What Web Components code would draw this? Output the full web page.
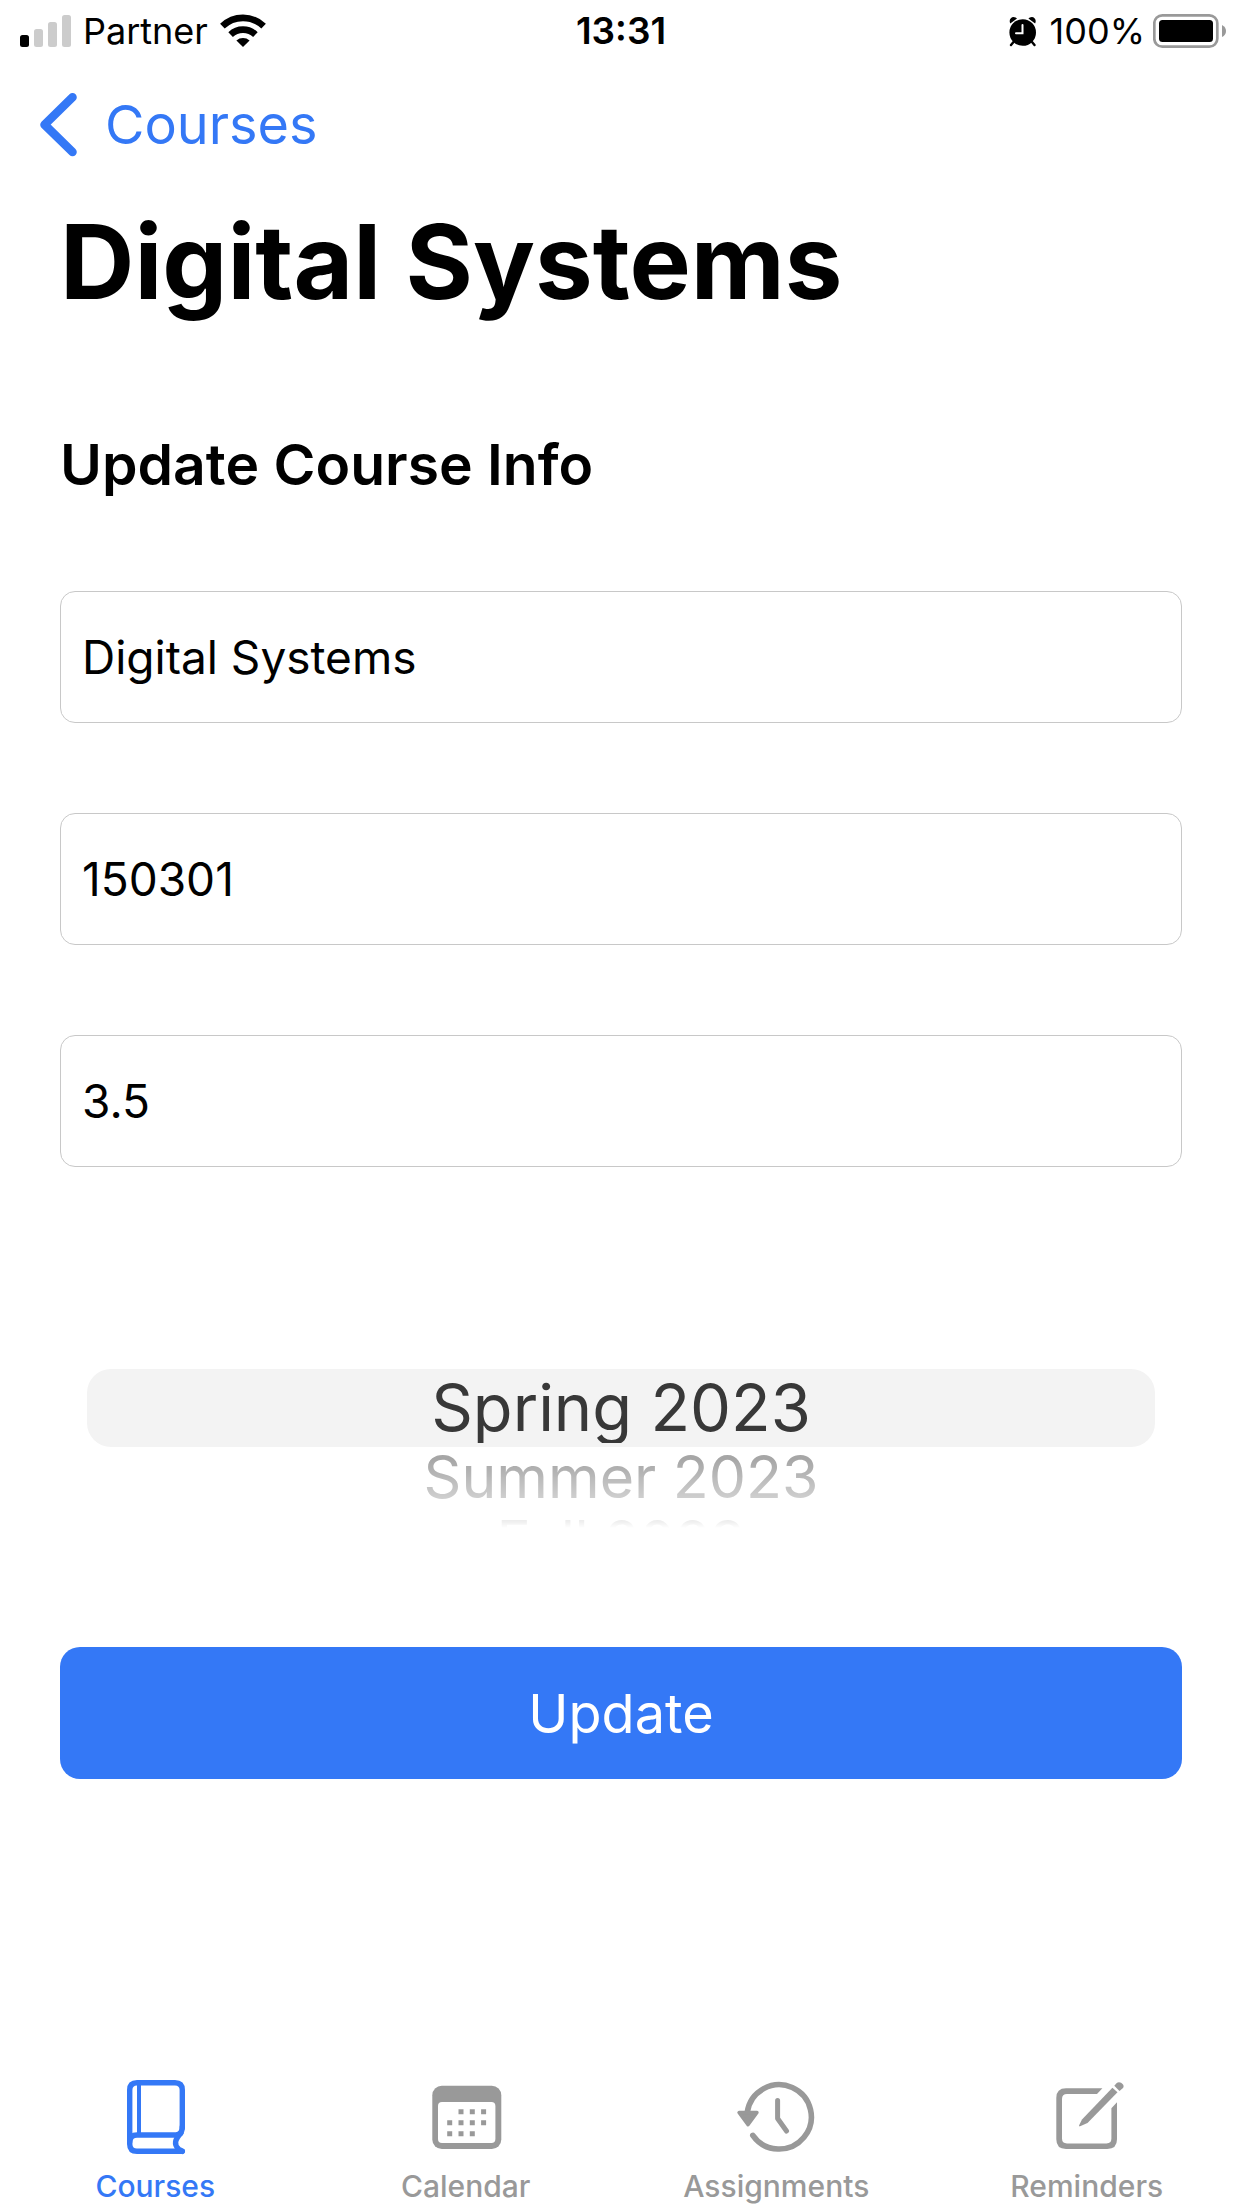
<!DOCTYPE html>
<html lang="en">
<head>
<meta charset="utf-8">
<meta name="viewport" content="width=device-width, initial-scale=1">
<title>Digital Systems</title>
<style>
  html, body { margin: 0; }
  body {
    --accent: #3478f6;
    --muted: #999999;
    background: #fff;
    color: #000;
    font-family: Inter, "Liberation Sans", sans-serif;
  }
</style>
</head>
<body>
<course-screen></course-screen>

<template id="t-screen">
  <style>
    :host { display: flex; flex-direction: column; min-height: 100vh; }
    main { padding: 11px 60px 0; }
    h1 { margin: 0 0 104px; font-size: 103px; line-height: 126px; font-weight: 700; }
    h2 { margin: 0 0 90px; font-size: 57px; line-height: 72px; font-weight: 600; }
    form { display: flex; flex-direction: column; gap: 90px; }
    tab-bar { margin-top: auto; }
  </style>
  <status-bar></status-bar>
  <nav-back>Courses</nav-back>
  <main>
    <h1>Digital Systems</h1>
    <h2>Update Course Info</h2>
    <form>
      <text-field label="Course name" value="Digital Systems"></text-field>
      <text-field label="Course number" value="150301"></text-field>
      <text-field label="Credits" value="3.5"></text-field>
      <wheel-picker></wheel-picker>
      <primary-button>Update</primary-button>
    </form>
  </main>
  <tab-bar></tab-bar>
</template>

<template id="t-status">
  <style>
    :host { display: grid; grid-template-columns: 1fr auto 1fr; align-items: center; height: 62px;
      padding: 0 15px; font-size: 36px; line-height: 42px; }
    div { display: flex; align-items: center; }
    .left { gap: 12px; padding-left: 5px; }
    .right { justify-content: flex-end; gap: 8px; }
    .alarm { margin-right: 5px; }
    time { font-size: 37px; font-weight: 600; }
    svg { display: block; flex: none; }
  </style>
  <div class="left">
    <svg width="51" height="60" viewBox="20 0 51 60" aria-hidden="true">
      <rect x="20" y="34" width="9" height="12" rx="2.5"/>
      <g fill="#ccc"><rect x="34" y="28" width="9" height="18" rx="2.5"/><rect x="48" y="21" width="9" height="25" rx="2.5"/><rect x="62" y="14" width="9" height="32" rx="2.5"/></g>
    </svg>
    <span>Partner</span>
    <svg width="46" height="60" viewBox="220 0 46 60" aria-hidden="true">
      <g fill="none" stroke="#000" stroke-width="6.6"><path d="M222.4 25.2A29.6 29.6 0 0 1 263.600 25.2"/><path d="M230.600 33.600A18 18 0 0 1 255.400 33.600"/></g>
      <path d="M236.400 39.400A10.500 10.500 0 0 1 249.600 39.400L243 46Z"/>
    </svg>
  </div>
  <time>13:31</time>
  <div class="right">
    <svg class="alarm" width="28" height="60" viewBox="1010 0 28 60" aria-hidden="true">
      <circle cx="1023.700" cy="31.500" r="13.300"/>
      <path d="M1011.300 22.500C1009.500 19 1012 16 1014.500 16Q1017 16 1018 17.500ZM1036.100 22.500C1037.900 19 1035.400 16 1032.900 16Q1030.400 16 1029.400 17.500Z"/>
      <path d="M1014.500 41L1012 44M1033 41L1035.500 44" stroke="#000" stroke-width="2.400" stroke-linecap="round"/>
      <path d="M1023.500 24V32.300H1017" fill="none" stroke="#fff" stroke-width="2" stroke-linecap="round"/>
    </svg>
    <span>100%</span>
    <svg width="74" height="60" viewBox="1153 0 74 60" aria-hidden="true">
      <rect x="1154.300" y="14.300" width="63" height="31.400" rx="8" fill="none" stroke="#999" stroke-width="2.700"/>
      <rect x="1159" y="19" width="54" height="22" rx="3.500"/>
      <path d="M1222 24Q1226 26 1226 30Q1226 34 1222 36Z" fill="#999"/>
    </svg>
  </div>
</template>

<template id="t-back">
  <style>
    :host { display: flex; align-items: center; height: 126px; padding: 0 40px; }
    a { display: flex; align-items: center; gap: 28px; color: var(--accent); text-decoration: none; font-size: 54px; line-height: 68px; }
    svg { display: block; }
  </style>
  <a href="#courses">
    <svg width="37" height="64" viewBox="40 93 37 64" aria-hidden="true"><path d="M72.500 97.300L44.500 124.700L72.500 152" fill="none" stroke="currentColor" stroke-width="8.600" stroke-linecap="round" stroke-linejoin="round"/></svg>
    <span><slot></slot></span>
  </a>
</template>

<template id="t-field">
  <style>
    :host { display: block; }
    input { display: block; box-sizing: border-box; width: 100%; height: 132px; margin: 0; padding: 0 21px;
      border: 1px solid #c8c8c8; border-radius: 15px; background: #fff; color: #000; font: inherit; font-size: 46px; outline: none; }
  </style>
  <input id="field" type="text">
</template>

<template id="t-wheel">
  <style>
    :host { display: block; }
    fieldset { box-sizing: border-box; height: 300px; margin: 0 27px; padding: 112px 0 0; border: 0; min-width: 0; }
    label { display: block; text-align: center; }
    input { appearance: none; position: absolute; margin: 0; width: 0; height: 0; }
    span { display: block; overflow: hidden; }
    .current { height: 78px; border-radius: 24px; background: #f3f3f3; }
    .current span { height: 74px; line-height: 78px; font-size: 65px; color: #383838; }
    .next { height: 60px; line-height: 60px; font-size: 59px; color: #a6a6a6;
      mask-image: linear-gradient(#000 20%, rgba(0,0,0,.5) 90%); }
    .last { height: 70px; line-height: 70px; font-size: 57px; color: #d8d8d8;
      mask-image: linear-gradient(rgba(0,0,0,.45) 20%, transparent 30%); }
  </style>
  <fieldset aria-label="Semester">
    <label class="current"><input type="radio" name="term" checked><span>Spring 2023</span></label>
    <label class="next"><input type="radio" name="term">Summer 2023</label>
    <label class="last"><input type="radio" name="term">Fall 2023</label>
  </fieldset>
</template>

<template id="t-button">
  <style>
    :host { display: block; }
    button { display: block; width: 100%; height: 132px; margin: 0; padding: 0; border: 0; border-radius: 20px;
      background: var(--accent); color: #fff; font: inherit; font-size: 54px; }
  </style>
  <button type="button"><slot></slot></button>
</template>

<template id="t-tabs">
  <style>
    :host { display: block; }
    nav { display: grid; grid-template-columns: repeat(4, 1fr); padding-bottom: 4px; }
  </style>
  <nav>
    <tab-item href="#courses" active>
      <svg slot="icon" width="90" height="90" viewBox="0 0 90 90" fill="none" stroke="currentColor" stroke-width="5.400" stroke-linecap="round" aria-hidden="true">
        <path d="M72.300 56V18Q72.300 10.700 65 10.700H27Q19.700 10.700 19.700 18V72Q19.700 79.300 27 79.300H72.300"/>
        <path d="M19.700 70Q20 63 27 63H66Q72.300 62.500 72.300 55"/>
        <path d="M71 61Q61.500 70.500 68.500 77L72.300 79.300"/>
        <path d="M29 12V61" stroke-width="4" stroke-linecap="butt"/>
      </svg>Courses</tab-item>
    <tab-item href="#calendar">
      <svg slot="icon" width="90" height="90" viewBox="0 0 90 90" fill="currentColor" aria-hidden="true">
        <rect x="11.300" y="13.700" width="69" height="63.300" rx="9.500"/>
        <rect x="17" y="30" width="57.400" height="41" rx="4" fill="#fff"/>
        <path d="M37.500 37.200h5v5h-5zM48.800 37.200h5v5h-5zM60.100 37.200h5v5h-5zM26.200 48.200h5v5h-5zM37.500 48.200h5v5h-5zM48.800 48.200h5v5h-5zM60.100 48.200h5v5h-5zM26.200 59.200h5v5h-5zM37.500 59.200h5v5h-5zM48.800 59.200h5v5h-5z"/>
      </svg>Calendar</tab-item>
    <tab-item href="#assignments">
      <svg slot="icon" width="90" height="90" viewBox="0 0 90 90" fill="none" stroke="currentColor" stroke-width="5.600" stroke-linecap="round" stroke-linejoin="round" aria-hidden="true">
        <path d="M16.300 40A32.200 32.200 0 1 1 21.800 63.400"/>
        <path d="M46.600 28.500V46.500L55.500 59" stroke-width="5"/>
        <path d="M8 40.500H26L17 52.800Z" fill="currentColor" stroke-width="3.400"/>
      </svg>Assignments</tab-item>
    <tab-item href="#reminders">
      <svg slot="icon" width="90" height="90" viewBox="0 0 90 90" fill="currentColor" aria-hidden="true">
        <path d="M60.400 16.300H24Q14.300 16.300 14.300 26V67.300Q14.300 77 24 77H65.300Q75 77 75 67.300V30.300L69.400 36.200V66.500Q69.400 71.400 64.500 71.400H25Q20 71.400 20 66.500V27Q20 22 25 22H55Z"/>
        <path d="M37 53.500L40 47.500L70.400 15.700L75.500 20.300L45.500 51L37.500 54.500Z"/>
        <path d="M72.300 13.700L74.500 11.200C77.500 8.200 83.500 12.500 81 16L77.500 19Z"/>
      </svg>Reminders</tab-item>
  </nav>
</template>

<template id="t-tab">
  <style>
    :host { display: block; color: var(--muted); }
    :host([active]) { color: var(--accent); }
    a { display: flex; flex-direction: column; align-items: center; gap: 6px; color: inherit; text-decoration: none;
      font-size: 30px; line-height: 36px; font-weight: 500; }
    ::slotted(svg) { display: block; }
  </style>
  <a><slot name="icon"></slot><span><slot></slot></span></a>
</template>

<script>
  class TemplateElement extends HTMLElement {
    constructor() {
      super();
      this.attachShadow({ mode: "open" })
        .append(document.getElementById(this.constructor.template).content.cloneNode(true));
    }
  }
  class StatusBar extends TemplateElement { static template = "t-status"; }
  class NavBack extends TemplateElement { static template = "t-back"; }
  class WheelPicker extends TemplateElement { static template = "t-wheel"; }
  class PrimaryButton extends TemplateElement { static template = "t-button"; }
  class TabBar extends TemplateElement { static template = "t-tabs"; }
  class CourseScreen extends TemplateElement { static template = "t-screen"; }
  class TextField extends TemplateElement {
    static template = "t-field";
    connectedCallback() {
      const input = this.shadowRoot.querySelector("input");
      input.value = this.getAttribute("value");
      input.setAttribute("aria-label", this.getAttribute("label"));
    }
  }
  class TabItem extends TemplateElement {
    static template = "t-tab";
    connectedCallback() {
      const link = this.shadowRoot.querySelector("a");
      link.href = this.getAttribute("href");
      if (this.hasAttribute("active")) link.setAttribute("aria-current", "page");
    }
  }
  customElements.define("status-bar", StatusBar);
  customElements.define("nav-back", NavBack);
  customElements.define("text-field", TextField);
  customElements.define("wheel-picker", WheelPicker);
  customElements.define("primary-button", PrimaryButton);
  customElements.define("tab-item", TabItem);
  customElements.define("tab-bar", TabBar);
  customElements.define("course-screen", CourseScreen);
</script>
</body>
</html>
